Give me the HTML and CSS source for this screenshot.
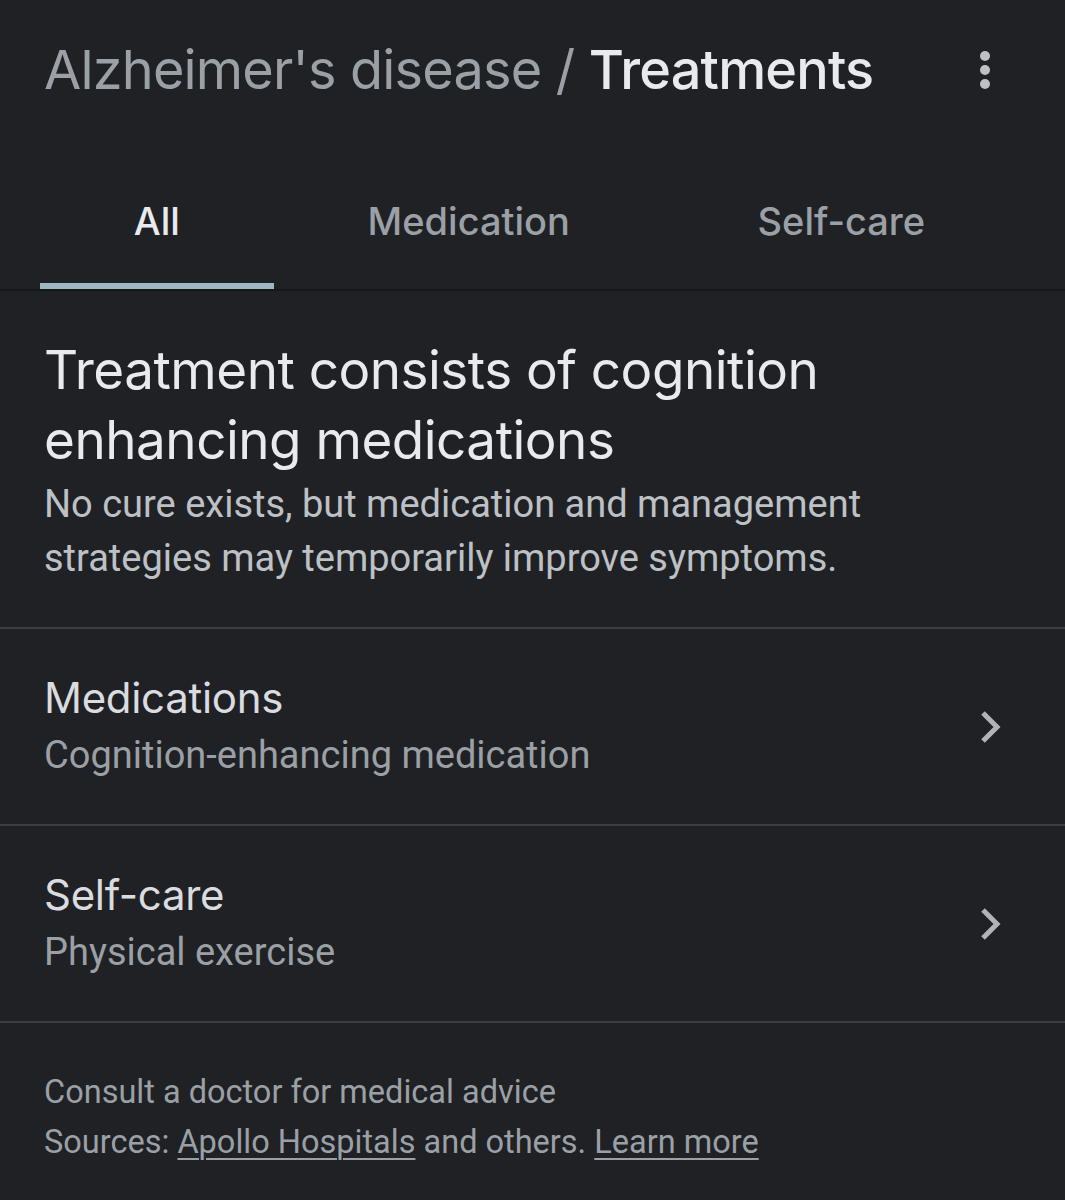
FILE: index.html
```html
<!DOCTYPE html>
<html lang="en">
<head>
<meta charset="utf-8">
<title>Alzheimer's disease / Treatments</title>
<link rel="stylesheet" href="styles.css">
</head>
<body>
<div class="page">
  <header class="header">
    <h1 class="crumb"><span class="crumb-parent">Alzheimer's disease / </span><span class="crumb-current">Treatments</span></h1>
    <button class="more" aria-label="More options">
      <svg width="24" height="40" viewBox="0 0 24 40"><circle cx="12" cy="6" r="5"/><circle cx="12" cy="20" r="5"/><circle cx="12" cy="34" r="5"/></svg>
    </button>
  </header>

  <nav class="tabs">
    <div class="tab active">All</div>
    <div class="tab">Medication</div>
    <div class="tab">Self-care</div>
  </nav>

  <section class="summary">
    <h2 class="summary-title">Treatment consists of cognition enhancing medications</h2>
    <p class="summary-text">No cure exists, but medication and management strategies may temporarily improve symptoms.</p>
  </section>

  <div class="row">
    <div class="row-text">
      <div class="row-title">Medications</div>
      <div class="row-sub">Cognition-enhancing medication</div>
    </div>
    <svg class="chev" width="24" height="36" viewBox="0 0 24 36"><path d="M4 4 L18 18 L4 32" /></svg>
  </div>

  <div class="row">
    <div class="row-text">
      <div class="row-title">Self-care</div>
      <div class="row-sub">Physical exercise</div>
    </div>
    <svg class="chev" width="24" height="36" viewBox="0 0 24 36"><path d="M4 4 L18 18 L4 32" /></svg>
  </div>

  <footer class="footer">
    <div>Consult a doctor for medical advice</div>
    <div>Sources: <a href="#">Apollo Hospitals</a> and others. <a href="#">Learn more</a></div>
  </footer>
</div>
</body>
</html>
```

FILE: styles.css
```css
html, body {
  margin: 0;
  padding: 0;
  background: #202124;
}
.page {
  width: 1065px;
  min-height: 1200px;
  background: #202124;
  font-family: Roboto, "Liberation Sans", sans-serif;
}
.header {
  display: flex;
  align-items: center;
  justify-content: space-between;
  height: 140px;
  padding: 0 68px 0 44px;
}
.crumb {
  margin: 0;
  font-family: Inter, "Open Sans", sans-serif;
  font-weight: 400;
  font-size: 54px;
  letter-spacing: -0.8px;
  line-height: 1;
  color: #9aa0a6;
}
.crumb-current {
  color: #e8eaed;
  font-weight: 500;
}
.more {
  background: none;
  border: 0;
  padding: 0;
  display: flex;
}
.more svg { fill: #bdc1c6; }

.tabs {
  display: flex;
  height: 149px;
  padding: 0 46px 0 40px;
  border-bottom: 2px solid #161719;
}
.tab {
  flex: 1 1 auto;
  display: flex;
  align-items: center;
  justify-content: center;
  font-family: Inter, "Open Sans", sans-serif;
  font-weight: 500;
  font-size: 38px;
  color: #9aa0a6;
  padding-top: 18px;
  box-sizing: border-box;
  border-bottom: 6px solid transparent;
}
.tab.active {
  color: #e8eaed;
  border-bottom-color: #9fb7c3;
}

.summary {
  padding: 44px 44px 42px;
  border-bottom: 2px solid #3c3e42;
}
.summary-title {
  margin: 0;
  font-family: Inter, "Open Sans", sans-serif;
  font-weight: 400;
  font-size: 53px;
  letter-spacing: -0.5px;
  line-height: 70px;
  color: #e8eaed;
}
.summary-text {
  margin: 2px 0 0;
  font-size: 38px;
  line-height: 54px;
  color: #bdc1c6;
}

.row {
  display: flex;
  align-items: center;
  justify-content: space-between;
  height: 195px;
  padding: 0 62px 0 44px;
  border-bottom: 2px solid #3c3e42;
}
.row-title {
  font-family: Inter, "Open Sans", sans-serif;
  font-size: 42px;
  line-height: 56px;
  color: #dadce0;
  letter-spacing: -0.3px;
}
.row-sub {
  font-size: 38px;
  line-height: 58px;
  color: #9aa0a6;
}
.chev path {
  fill: none;
  stroke: #b0b3b8;
  stroke-width: 5;
}

.footer {
  padding: 44px 44px 0;
  font-size: 32.5px;
  line-height: 50px;
  color: #9aa0a6;
}
.footer a {
  color: #9aa0a6;
  text-decoration: underline;
  text-underline-offset: 5px;
  text-decoration-thickness: 2px;
}
```
